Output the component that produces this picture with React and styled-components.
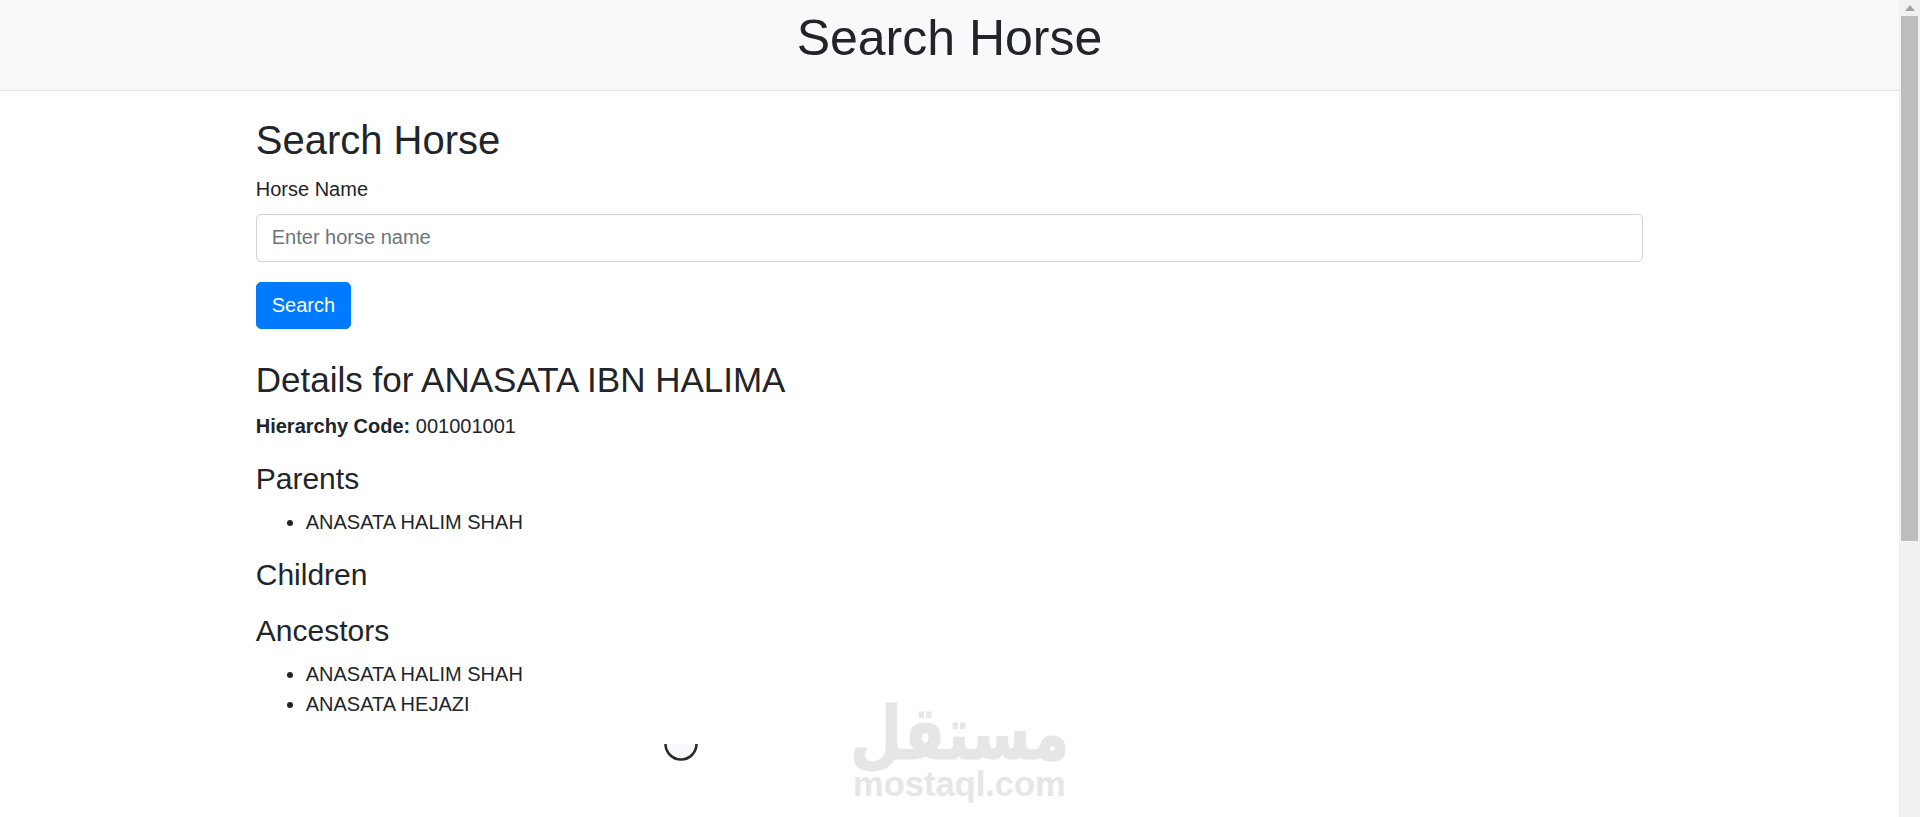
import React from "react";
import styled, { createGlobalStyle } from "styled-components";

const Global = createGlobalStyle`
  html, body { margin: 0; height: 100%; overflow: hidden; background: #fff; }
  #root { height: 100%; }
  * { box-sizing: border-box; }
  body {
    font-family: "Liberation Sans", Arial, sans-serif;
    font-size: 20px;
    line-height: 1.5;
    color: #212529;
  }
`;

const Shell = styled.div`
  position: relative;
  display: flex;
  height: 817px;
  overflow: hidden;
`;
const Page = styled.div`
  flex: 1;
  min-width: 0;
`;
const Header = styled.header`
  height: 91px;
  background: #f8f9fa;
  border-bottom: 1px solid #dee2e6;
  padding-top: 8px;
  text-align: center;
`;
const Title = styled.h1`
  margin: 0;
  font-size: 50px;
  font-weight: 400;
  line-height: 60px;
`;
const Container = styled.main`
  width: 1425px;
  margin: 0 auto;
  padding: 25px 18.75px 0;
`;
const Heading = styled.h2`
  margin: 0 0 10px;
  font-weight: 400;
  line-height: 1.2;
  font-size: ${(p) => p.$size}px;
`;
const Field = styled.div`
  margin-bottom: 20px;
`;
const Label = styled.label`
  display: inline-block;
  margin-bottom: 10px;
`;
const Input = styled.input`
  display: block;
  width: 100%;
  height: 47.5px;
  padding: 0 15px;
  font: inherit;
  color: #495057;
  background: #fff;
  border: 1px solid #ced4da;
  border-radius: 5px;
  outline: none;
  &::placeholder { color: #6c757d; opacity: 1; }
`;
const Button = styled.button`
  display: block;
  height: 47.5px;
  padding: 0 15px;
  font: inherit;
  color: #fff;
  background: #007bff;
  border: 1px solid #007bff;
  border-radius: 5px;
`;
const Details = styled.section`
  margin-top: 30px;
`;
const Paragraph = styled.p`
  margin: 0 0 20px;
`;
const List = styled.ul`
  margin: 0 0 20px;
  padding-left: 50px;
`;
const Scrollbar = styled.div`
  flex: none;
  width: 21px;
  background: #f1f1f1;
  display: flex;
  flex-direction: column;
  align-items: center;
`;
const ScrollArrow = styled.div`
  flex: none;
  width: 100%;
  height: 16px;
  display: flex;
  align-items: center;
  justify-content: center;
  color: #a3a3a3;
`;
const ScrollThumb = styled.div`
  flex: none;
  width: 17px;
  height: 525px;
  background: #bdbdbd;
`;
const Spinner = styled.svg`
  position: absolute;
  left: 663px;
  top: 744px;
`;
const Watermark = styled.div`
  position: absolute;
  left: 853px;
  top: 700px;
  width: 212px;
  color: #e6e6e6;
  font-weight: 700;
  text-align: center;
  pointer-events: none;
`;
const WatermarkArabic = styled.div`
  font-family: "DejaVu Sans", sans-serif;
  font-size: 60px;
  line-height: 54px;
  height: 72px;
  white-space: nowrap;
  -webkit-text-stroke: 1px #e6e6e6;
  transform: translateX(-3px) scaleY(1.23);
  transform-origin: 50% 0;
`;
const WatermarkLatin = styled.div`
  font-size: 34.5px;
  line-height: 24px;
  white-space: nowrap;
`;

export default function App() {
  return (
    <Shell>
      <Global />
      <Page>
        <Header>
          <Title>Search Horse</Title>
        </Header>
        <Container>
          <Heading $size={40}>Search Horse</Heading>
          <Field>
            <Label htmlFor="horse">Horse Name</Label>
            <Input id="horse" placeholder="Enter horse name" />
          </Field>
          <Button>Search</Button>
          <Details>
            <Heading $size={35}>Details for ANASATA IBN HALIMA</Heading>
            <Paragraph>
              <strong>Hierarchy Code:</strong> 001001001
            </Paragraph>
            <Heading $size={30}>Parents</Heading>
            <List>
              <li>ANASATA HALIM SHAH</li>
            </List>
            <Heading $size={30}>Children</Heading>
            <List />
            <Heading $size={30}>Ancestors</Heading>
            <List>
              <li>ANASATA HALIM SHAH</li>
              <li>ANASATA HEJAZI</li>
            </List>
          </Details>
        </Container>
      </Page>
      <Scrollbar>
        <ScrollArrow>
          <svg width="10" height="6" viewBox="0 0 10 6">
            <path d="M5 0 L10 6 L0 6 Z" fill="currentColor" />
          </svg>
        </ScrollArrow>
        <ScrollThumb />
      </Scrollbar>
      <Spinner width="36" height="18" viewBox="0 0 36 18">
        <path d="M2.5 0 A15.5 15.5 0 0 0 33.5 0" fill="#f8f9fa" stroke="#2b2b2e" strokeWidth="2.6" />
      </Spinner>
      <Watermark>
        <WatermarkArabic>مستقل</WatermarkArabic>
        <WatermarkLatin>mostaql.com</WatermarkLatin>
      </Watermark>
    </Shell>
  );
}
